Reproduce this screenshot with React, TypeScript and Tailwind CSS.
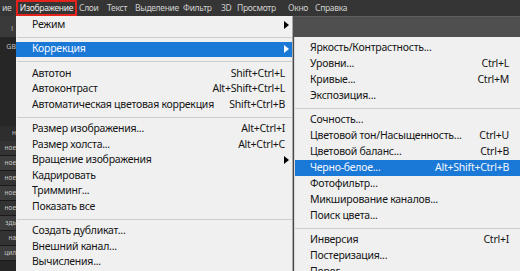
import React from "react";

const Arrow = ({ color = "#000" }: { color?: string }) => (
  <svg width="5" height="8" viewBox="0 0 5 8" className="shrink-0 -mr-[4px]">
    <polygon points="0,0 5,4 0,8" fill={color} />
  </svg>
);

type Item = { label: string; sc?: string; arrow?: boolean; hl?: boolean } | "sep";

const mainItems: Item[] = [
  { label: "Режим", arrow: true },
  "sep",
  { label: "Коррекция", arrow: true, hl: true },
  "sep",
  { label: "Автотон", sc: "Shift+Ctrl+L" },
  { label: "Автоконтраст", sc: "Alt+Shift+Ctrl+L" },
  { label: "Автоматическая цветовая коррекция", sc: "Shift+Ctrl+B" },
  "sep",
  { label: "Размер изображения...", sc: "Alt+Ctrl+I" },
  { label: "Размер холста...", sc: "Alt+Ctrl+C" },
  { label: "Вращение изображения", arrow: true },
  { label: "Кадрировать" },
  { label: "Тримминг..." },
  { label: "Показать все" },
  "sep",
  { label: "Создать дубликат..." },
  { label: "Внешний канал..." },
  { label: "Вычисления..." },
];

const subItems: Item[] = [
  { label: "Яркость/Контрастность..." },
  { label: "Уровни...", sc: "Ctrl+L" },
  { label: "Кривые...", sc: "Ctrl+M" },
  { label: "Экспозиция..." },
  "sep",
  { label: "Сочность..." },
  { label: "Цветовой тон/Насыщенность...", sc: "Ctrl+U" },
  { label: "Цветовой баланс...", sc: "Ctrl+B" },
  { label: "Черно-белое...", sc: "Alt+Shift+Ctrl+B", hl: true },
  { label: "Фотофильтр..." },
  { label: "Микширование каналов..." },
  { label: "Поиск цвета..." },
  "sep",
  { label: "Инверсия", sc: "Ctrl+I" },
  { label: "Постеризация..." },
  { label: "Порог..." },
];

const leftRows = ["ное", "ное", "ное", "ное", "ное", "здь", "на", "цил"];

const barItems: [string, string][] = [
  ["Слои", "w-[28px]"],
  ["Текст", "w-[28px]"],
  ["Выделение", "w-[48px]"],
  ["Фильтр", "w-[38px]"],
  ["3D", "w-[16px]"],
  ["Просмотр", "w-[51px]"],
  ["Окно", "w-[27px]"],
  ["Справка", "w-[40px]"],
];

export default function App() {
  return (
    <div
      className="w-[520px] h-[271px] overflow-hidden bg-[#4a4a4a] flex flex-col"
      style={{ fontFamily: '"Noto Sans", "Open Sans", sans-serif' }}
    >
      {/* menu bar */}
      <div className="h-[16px] bg-[#353535] flex items-center text-[8.5px] tracking-[-0.3px] leading-none text-[#d0d0d0] shrink-0">
        <div className="w-[16px] shrink-0 flex justify-start pl-[2px]">ие</div>
        <div className="h-[16px] w-[61px] shrink-0 border-2 border-[#e3231c] flex items-center justify-center text-[#ececec] whitespace-nowrap">
          Изображение
        </div>
        <div className="flex items-center ml-[2px] shrink-0">
          {barItems.map(([t, w]) => (
            <span key={t} className={`${w} shrink-0 whitespace-nowrap`}>
              {t}
            </span>
          ))}
        </div>
      </div>

      <div className="flex flex-1 min-h-0">
        {/* left strip */}
        <div className="w-[16px] bg-[#262626] flex flex-col text-[6.5px] leading-none text-[#c4c4c4] shrink-0">
          <div className="h-[21px] bg-[#3a3a3a] flex items-end justify-end pr-[3px] pb-[5px] shrink-0">l</div>
          <div className="h-[19px] flex items-center justify-end whitespace-nowrap shrink-0 text-[7px]">GB</div>
          <div className="h-[70px] shrink-0" />
          <div className="h-[15px] flex items-center justify-end bg-[#2e2e2e] shrink-0">н</div>
          {leftRows.map((t, i) => (
            <div
              key={i}
              className={`h-[15px] shrink-0 flex items-center justify-end whitespace-nowrap border-b border-[#1a1a1a] ${
                i % 2 ? "bg-[#3d3d3d]" : "bg-[#333333]"
              }`}
            >
              {t}
            </div>
          ))}
        </div>

        {/* main menu */}
        <div className="w-[277px] bg-[#f0f0f0] border-r border-[#a9a9a9] pt-[1px] flex flex-col text-[10.5px] tracking-[-0.25px] text-[#141414] shrink-0">
          {mainItems.map((it, i) =>
            it === "sep" ? (
              <div key={i} className="h-[9px] shrink-0 flex items-center pl-[1px]">
                <div className="h-px w-full bg-[#cdcdcd]" />
              </div>
            ) : (
              <div
                key={i}
                className={`h-[15.5px] shrink-0 flex items-center pl-[16px] pr-[7px] whitespace-nowrap ${
                  it.hl ? "bg-[#1a78d7] text-[#f2f7ff]" : ""
                }`}
              >
                <span className="flex-1">{it.label}</span>
                {it.sc && <span>{it.sc}</span>}
                {it.arrow && <Arrow color={it.hl ? "#ffffff" : "#000000"} />}
              </div>
            )
          )}
        </div>

        {/* right area */}
        <div className="flex-1 flex flex-col min-w-0">
          <div className="h-[21px] bg-[#4f4f4f] border-t border-[#5e5e5e] shrink-0" />
          <div className="flex-1 bg-[#f0f0f0] ml-[1px] border-l border-[#d8d8d8] pt-[3px] flex flex-col text-[10.5px] tracking-[-0.25px] text-[#141414]">
            {subItems.map((it, i) =>
              it === "sep" ? (
                <div key={i} className="h-[8px] shrink-0 flex items-center">
                  <div className="h-px w-full bg-[#cdcdcd]" />
                </div>
              ) : (
                <div
                  key={i}
                  className={`h-[16px] shrink-0 flex items-center pl-[15px] pr-[11px] whitespace-nowrap ${
                    it.hl ? "bg-[#1a78d7] text-[#f2f7ff]" : ""
                  }`}
                >
                  <span className="flex-1">{it.label}</span>
                  {it.sc && <span>{it.sc}</span>}
                </div>
              )
            )}
          </div>
        </div>
      </div>
    </div>
  );
}
